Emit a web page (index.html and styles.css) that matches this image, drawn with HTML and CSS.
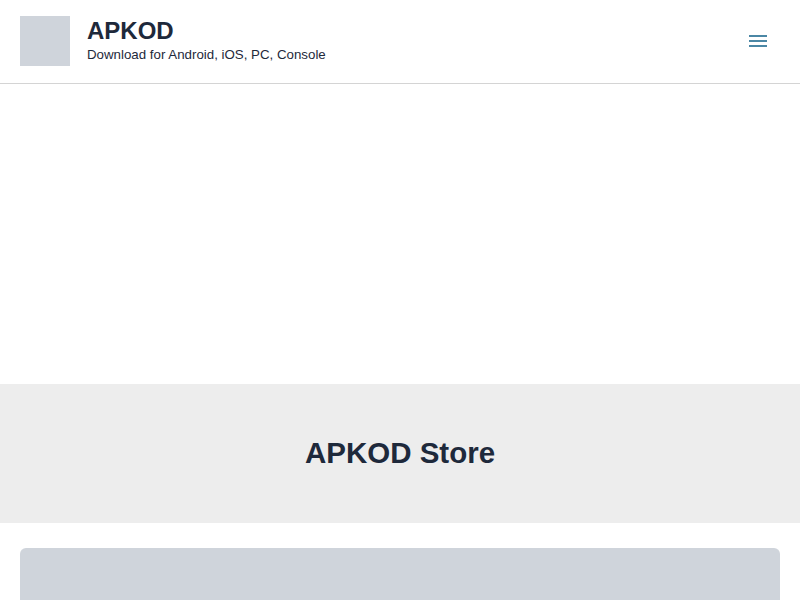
FILE: index.html
```html
<!DOCTYPE html>
<html>
<head>
    <title>APKOD</title>
    <link rel="stylesheet" href="styles.css">
</head>
<body>
    <header class="site-header">
        <div class="brand">
            <div class="logo"></div>
            <div class="brand-text">
                <div class="site-title">APKOD</div>
                <div class="site-desc">Download for Android, iOS, PC, Console</div>
            </div>
        </div>
        <button class="menu-btn" aria-label="Menu">
            <svg width="18" height="12" viewBox="0 0 18 12">
                <rect x="0" y="0" width="18" height="2"/>
                <rect x="0" y="5" width="18" height="2"/>
                <rect x="0" y="10" width="18" height="2"/>
            </svg>
        </button>
    </header>

    <div class="ad-space"></div>

    <section class="hero">
        <h1>APKOD Store</h1>
    </section>

    <main class="content">
        <div class="card"></div>
    </main>
</body>
</html>
```

FILE: styles.css
```css
body { margin: 0; font-family: "Liberation Sans", Arial, sans-serif; color: #1e293b; background: #fff; }
.site-header { padding: 16px 20px 17px; border-bottom: 1px solid #d4d4d4; display: flex; align-items: center; justify-content: space-between; }
.brand { display: flex; align-items: center; gap: 17px; }
.logo { width: 50px; height: 50px; background: #cfd4db; }
.site-title { font-size: 24px; font-weight: bold; line-height: 22px; }
.site-desc { font-size: 13.3px; line-height: 17px; margin-top: 4px; }
.menu-btn { background: none; border: none; padding: 0; margin-right: 13px; cursor: pointer; display: flex; fill: #4b87a5; }
.ad-space { height: 300px; }
.hero { background: #ededed; height: 139px; box-sizing: border-box; padding-bottom: 2px; display: flex; align-items: center; justify-content: center; }
.hero h1 { margin: 0; font-size: 29.5px; font-weight: bold; }
.content { padding: 25px 20px; }
.card { height: 300px; background: #cfd4db; border-radius: 6px; }
```
